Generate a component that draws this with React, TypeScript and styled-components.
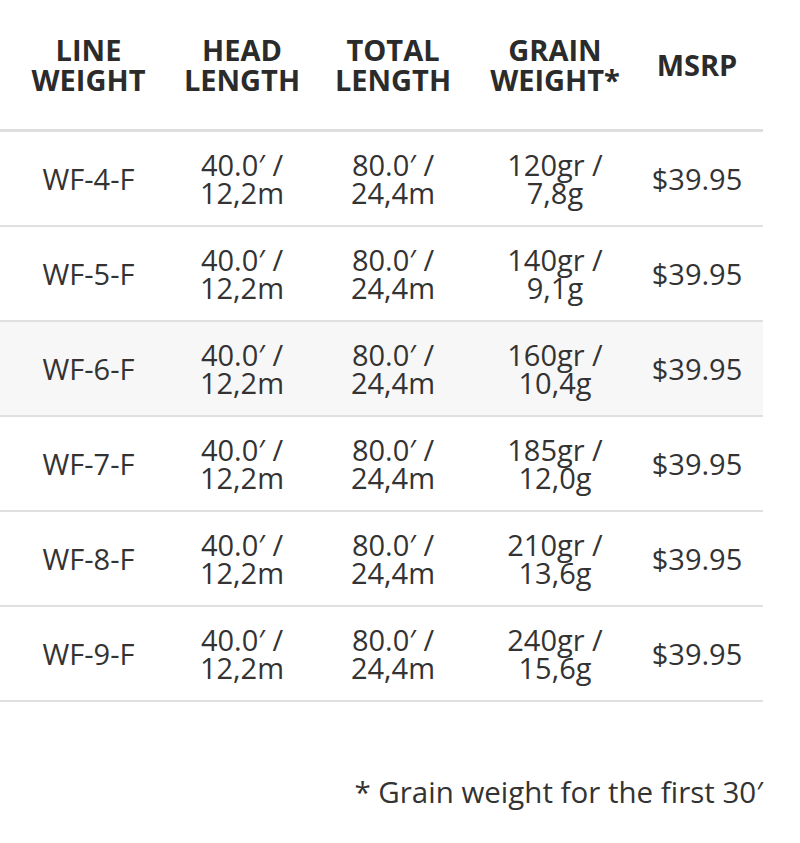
import React from 'react'
import styled, { createGlobalStyle } from 'styled-components'

const GlobalStyle = createGlobalStyle`
	html, body {
		margin: 0;
		padding: 0;
		background: #fff;
	}
	body {
		font-family: "Open Sans", "Liberation Sans", sans-serif;
		color: #333;
	}
`

const Wrapper = styled.div`
	width: 763px;
`

const Table = styled.table`
	width: 763px;
	border-collapse: collapse;
	table-layout: fixed;
`

const HeadCell = styled.th<{ $w: number }>`
	width: ${p => p.$w}px;
	height: 129px;
	padding: 0;
	font-size: 29px;
	font-weight: 700;
	line-height: 30px;
	color: #2b2b2b;
	text-transform: uppercase;
	text-align: center;
	vertical-align: middle;
	border-bottom: 3px solid #dedede;
`

const Row = styled.tr<{ $shade?: boolean }>`
	background: ${p => (p.$shade ? '#f7f7f7' : 'transparent')};
	border-bottom: 2px solid #e0e0e0;
`

const Cell = styled.td`
	height: 93px;
	padding: 0;
	font-size: 29px;
	line-height: 28px;
	text-align: center;
	vertical-align: middle;
	color: #333;
`

const Note = styled.p`
	margin: 72px 0 0;
	font-size: 29.5px;
	line-height: 36px;
	text-align: right;
	color: #333;
`

const cols = [
	{ label: ['Line', 'Weight'], w: 177 },
	{ label: ['Head', 'Length'], w: 130 },
	{ label: ['Total', 'Length'], w: 172 },
	{ label: ['Grain', 'Weight*'], w: 152 },
	{ label: ['MSRP'], w: 132 },
]

const rows = [
	{ line: 'WF-4-F', gr: '120gr', g: '7,8g' },
	{ line: 'WF-5-F', gr: '140gr', g: '9,1g' },
	{ line: 'WF-6-F', gr: '160gr', g: '10,4g' },
	{ line: 'WF-7-F', gr: '185gr', g: '12,0g' },
	{ line: 'WF-8-F', gr: '210gr', g: '13,6g' },
	{ line: 'WF-9-F', gr: '240gr', g: '15,6g' },
]

export default function App() {
	return (
		<Wrapper>
			<GlobalStyle />
			<Table>
				<thead>
					<tr>
						{cols.map(c => (
							<HeadCell key={c.label.join()} $w={c.w}>
								{c.label[0]}
								{c.label[1] && <><br />{c.label[1]}</>}
							</HeadCell>
						))}
					</tr>
				</thead>
				<tbody>
					{rows.map((r, i) => (
						<Row key={r.line} $shade={i === 2}>
							<Cell>{r.line}</Cell>
							<Cell>40.0′ /<br />12,2m</Cell>
							<Cell>80.0′ /<br />24,4m</Cell>
							<Cell>{r.gr} /<br />{r.g}</Cell>
							<Cell>$39.95</Cell>
						</Row>
					))}
				</tbody>
			</Table>
			<Note>* Grain weight for the first 30′</Note>
		</Wrapper>
	)
}
